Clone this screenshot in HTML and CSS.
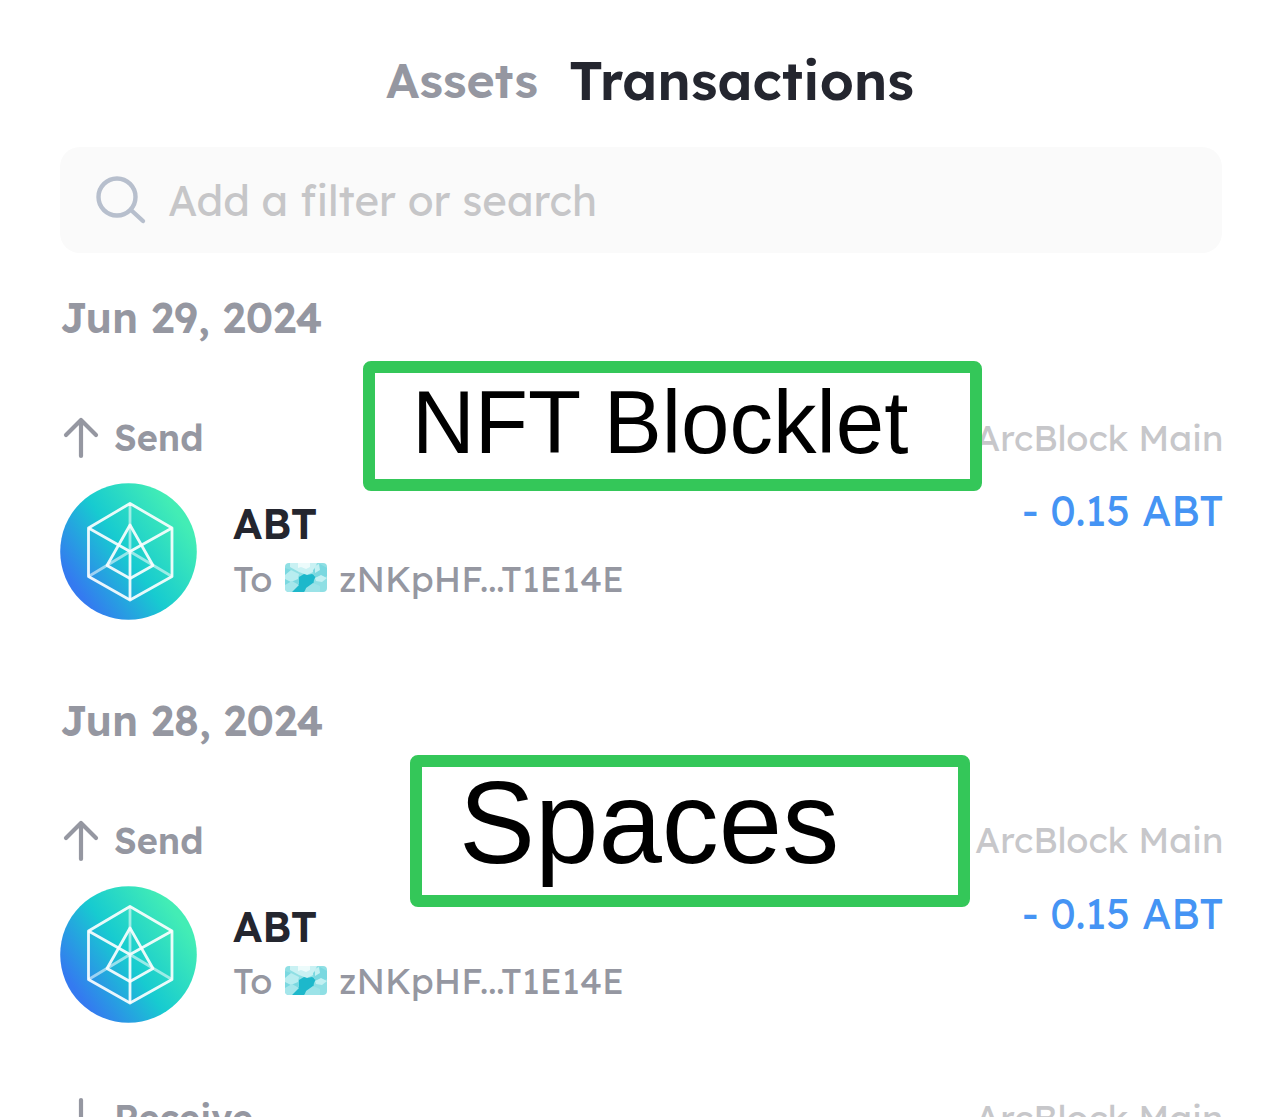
FILE: index.html
```html
<!DOCTYPE html>
<html lang="en">
<head>
<meta charset="utf-8">
<title>Transactions</title>
<link rel="stylesheet" href="styles.css">
</head>
<body>
<svg class="defs" width="0" height="0" aria-hidden="true">
  <defs>
    <linearGradient id="token-fill" gradientUnits="userSpaceOnUse" x1="18" y1="108" x2="122" y2="36">
      <stop offset="0" stop-color="#347af0"/>
      <stop offset=".48" stop-color="#17cbd0"/>
      <stop offset="1" stop-color="#43edb5"/>
    </linearGradient>
    <symbol id="token" viewBox="0 0 137 137">
      <circle cx="68.5" cy="68.5" r="68.3" fill="url(#token-fill)"/>
      <g fill="none" stroke="#fff" stroke-opacity=".9" stroke-width="2.8" stroke-linejoin="round">
        <path d="M70 20.500 112 45V93.500L70 117 28.500 93.500V45Z"/>
        <path d="M28.500 45 70 68.500 112 45M70 68.500V117"/>
        <path d="M70 42 93 82.500 70 95.500 47 82.500Z"/>
        <path d="M70 20.500V68.500M28.500 93.500 70 68.500 112 93.500" stroke-opacity=".55"/>
      </g>
    </symbol>
    <clipPath id="did-clip"><rect width="42" height="29" rx="4"/></clipPath>
    <symbol id="did" viewBox="0 0 42 29">
      <g clip-path="url(#did-clip)">
        <path fill="#8fdfe4" d="M0 0h42v29H0z"/>
        <path fill="#c9f1f3" d="M5 0h27l-4 9-6 3-8-3-9-5z"/>
        <path fill="#ecfbfb" d="M13 0h12v4l-4 2-5-2-3 1z"/>
        <path fill="#7ad8e0" d="M0 5l6 2 5 4 6 4-5 9-6-3-6 2z"/>
        <path fill="#b8edf0" d="M0 12l6-5 8 4-1 5-7 3-6-3z"/>
        <path fill="#1db8cb" d="M14 14l5-3 3 1 5-1 4 2-2 4-1 6-7 3-2 3H7l1-4 6-4z"/>
        <path fill="#a5e6eb" d="M0 22l7-4 7 4-7 7H0z"/>
        <path fill="#7ad8e0" d="M28 7l7-6 7 4v8l-7 3-6-3z"/>
        <path fill="#c2f0f2" d="M30 15l6-3 6 3-5 4-6-1zM30 3l4-2 1 6-5 3z"/>
        <path fill="#9ce3e8" d="M21 25l7-5 7 3v6H20z"/>
      </g>
    </symbol>
    <symbol id="arrow" viewBox="0 0 36 42">
      <path d="M18 39V3M3 18 18 3 33 18" fill="none" stroke="#9597a1" stroke-width="4.200" stroke-linecap="round" stroke-linejoin="round"/>
    </symbol>
  </defs>
</svg>

<main class="screen">
  <nav class="tabs">
    <span class="tab">Assets</span>
    <span class="tab tab-active">Transactions</span>
  </nav>

  <div class="search">
    <svg class="search-icon" viewBox="0 0 52 50"><circle cx="22" cy="22" r="18.500"/><path d="M36 35 48 46"/></svg>
    <span class="placeholder">Add a filter or search</span>
  </div>

  <section class="group">
    <h2 class="date">Jun 29, 2024</h2>
    <div class="head">
      <svg class="arrow"><use href="#arrow"/></svg>
      <span class="kind">Send</span>
      <span class="chain">ArcBlock Main</span>
    </div>
    <div class="entry">
      <svg class="token"><use href="#token"/></svg>
      <div class="detail">
        <span class="name">ABT</span>
        <div class="to"><span class="to-label">To</span><svg class="did"><use href="#did"/></svg><span class="address">zNKpHF...T1E14E</span></div>
      </div>
      <span class="amount">- 0.15 ABT</span>
    </div>
    <div class="note note-nft"><span class="note-text">NFT Blocklet</span></div>
  </section>

  <section class="group">
    <h2 class="date">Jun 28, 2024</h2>
    <div class="head">
      <svg class="arrow"><use href="#arrow"/></svg>
      <span class="kind">Send</span>
      <span class="chain">ArcBlock Main</span>
    </div>
    <div class="entry">
      <svg class="token"><use href="#token"/></svg>
      <div class="detail">
        <span class="name">ABT</span>
        <div class="to"><span class="to-label">To</span><svg class="did"><use href="#did"/></svg><span class="address">zNKpHF...T1E14E</span></div>
      </div>
      <span class="amount">- 0.15 ABT</span>
    </div>
    <div class="note note-spaces"><span class="note-text">Spaces</span></div>
  </section>

  <div class="head head-next">
    <svg class="arrow arrow-down"><use href="#arrow"/></svg>
    <span class="kind">Receive</span>
    <span class="chain">ArcBlock Main</span>
  </div>
</main>
</body>
</html>
```
FILE: styles.css
```css
* { box-sizing: border-box; }

body {
  margin: 0;
  background: #fff;
  font-family: Lexend, Inter, sans-serif;
  color: #24262f;
}

.defs { position: absolute; }

.screen {
  width: 1284px;
  height: 1117px;
  padding: 45px 62px 0 60px;
  overflow: hidden;
  white-space: nowrap;
}

.tabs {
  display: flex;
  align-items: center;
  height: 70px;
  padding-left: 326px;
  gap: 31px;
}

.tab {
  font-size: 48px;
  font-weight: 600;
  color: #9597a1;
}

.tab-active {
  font-size: 54px;
  color: #24262f;
}

.search {
  display: flex;
  align-items: center;
  height: 106px;
  margin-top: 32px;
  padding-left: 35px;
  gap: 21px;
  border-radius: 20px;
  background: #fafafa;
}

.search-icon {
  width: 52px;
  height: 50px;
  fill: none;
  stroke: #b7bfcd;
  stroke-width: 4.4;
  stroke-linecap: round;
}

.placeholder {
  padding-top: 1px;
  font-size: 42px;
  color: #c6c6c8;
}

.group {
  position: relative;
  height: 402.500px;
  padding-top: 34px;
}

.date {
  margin: 0;
  font-size: 42px;
  line-height: 62px;
  font-weight: 600;
  color: #9597a1;
}

.head {
  display: flex;
  align-items: center;
  height: 60px;
  margin-top: 59px;
}

.head-next { margin-top: 30px; }

.arrow {
  width: 36px;
  height: 42px;
  margin: 0 15px 0 3px;
}

.arrow-down { transform: rotate(180deg); }

.kind {
  padding-bottom: 1px;
  font-size: 36px;
  font-weight: 600;
  color: #9597a1;
}

.chain {
  margin-left: auto;
  margin-right: -1.5px;
  padding-bottom: 2px;
  font-size: 36px;
  color: #c7c7ca;
}

.entry {
  display: flex;
  height: 137px;
  margin-top: 15px;
}

.token {
  width: 137px;
  height: 137px;
}

.detail {
  display: flex;
  flex-direction: column;
  padding: 14px 0 0 36px;
}

.name {
  font-size: 42px;
  line-height: 54px;
  font-weight: 600;
}

.to {
  display: flex;
  align-items: center;
  height: 54px;
  font-size: 36px;
  color: #9597a1;
}

.to-label { width: 52px; }

.did {
  width: 42px;
  height: 29px;
  margin: -1px 12px 0 0;
}

.amount {
  margin-left: auto;
  margin-right: -1.5px;
  font-size: 42px;
  line-height: 56px;
  color: #4594f4;
}

.note {
  position: absolute;
  background: #fff;
  border: 12px solid #34c759;
  border-radius: 8px;
  font-family: "Liberation Sans", Arial, sans-serif;
  color: #000;
}

.note-text {
  display: block;
  transform-origin: 0 80%;
}

.note-nft {
  left: 303px;
  top: 108px;
  width: 619px;
  height: 130px;
  padding-left: 37px;
  font-size: 87px;
  line-height: 100px;
}

.note-nft .note-text { transform: scaleY(1.030); }

.note-spaces {
  left: 350px;
  top: 99px;
  width: 560px;
  height: 152px;
  padding-left: 37px;
  font-size: 114px;
  line-height: 113px;
}

.note-spaces .note-text { transform: scaleY(1.020); }
```
